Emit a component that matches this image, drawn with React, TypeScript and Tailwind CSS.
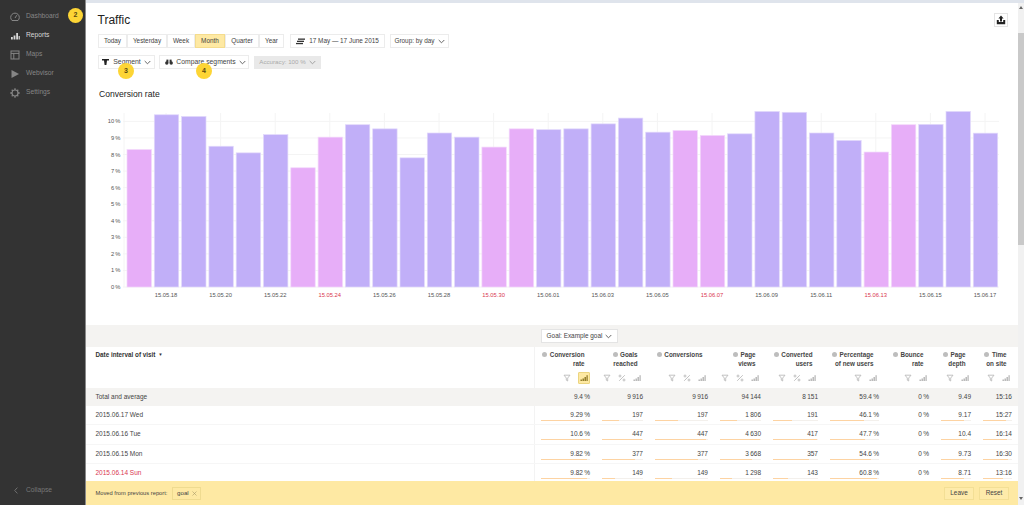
const FONT = "font-['Liberation_Sans',Arial,sans-serif]";

const bars: [number, boolean][] = [
  [8.3, true], [10.4, false], [10.3, false], [8.5, false], [8.1, false], [9.2, false], [7.2, true], [9.05, true],
  [9.8, false], [9.55, false], [7.8, false], [9.3, false], [9.05, false], [8.45, true], [9.55, true], [9.5, false],
  [9.55, false], [9.85, false], [10.2, false], [9.35, false], [9.45, true], [9.15, true], [9.25, false], [10.6, false],
  [10.55, false], [9.3, false], [8.85, false], [8.15, true], [9.8, true], [9.82, false], [10.6, false], [9.29, false],
];

const dateLabels: [string, boolean][] = [
  ["15.05.18", false], ["15.05.20", false], ["15.05.22", false], ["15.05.24", true], ["15.05.26", false],
  ["15.05.28", false], ["15.05.30", true], ["15.06.01", false], ["15.06.03", false], ["15.06.05", false],
  ["15.06.07", true], ["15.06.09", false], ["15.06.11", false], ["15.06.13", true], ["15.06.15", false], ["15.06.17", false],
];

function Chevron({ className = "" }: { className?: string }) {
  return (
    <svg width="7" height="5" viewBox="0 0 7 5" className={className} fill="none" stroke="currentColor" strokeWidth="0.9">
      <path d="M0.7 1 L3.5 3.8 L6.3 1" />
    </svg>
  );
}

function Badge({ n, className }: { n: number; className: string }) {
  return (
    <div className={`absolute z-10 flex items-center justify-center rounded-full bg-[#fdd535] text-[7px] font-bold text-[#5a4a10] ${className}`}>
      {n}
    </div>
  );
}

function NavItem({ label, active, icon }: { label: string; active?: boolean; icon: React.ReactNode }) {
  return (
    <div className={`flex h-[19px] items-center pl-[10px] text-[6.7px] ${active ? "text-[#d8d8d8]" : "text-[#868686]"}`}>
      <span className="flex w-[16px] items-center">{icon}</span>
      {label}
    </div>
  );
}

function Btn({ w, active, children }: { w: string; active?: boolean; children: React.ReactNode }) {
  return (
    <div className={`flex h-[14px] items-center justify-center gap-[3px] border text-[6.4px] text-[#444] ${w} ${active ? "border-[#f4dc8e] bg-[#fee9a3]" : "border-[#ececec] bg-white"}`}>
      {children}
    </div>
  );
}

function Funnel() {
  return (
    <svg width="8" height="8" viewBox="0 0 8 8" fill="none" stroke="#b4b4b4" strokeWidth="0.8">
      <path d="M1 1.2 H7 L4.7 4 V7 L3.3 6.2 V4 Z" />
    </svg>
  );
}
function Pct() {
  return (
    <svg width="8" height="8" viewBox="0 0 8 8" fill="none" stroke="#b4b4b4" strokeWidth="0.8">
      <path d="M1.2 6.8 L6.8 1.2" />
      <circle cx="2" cy="2" r="1" />
      <circle cx="6" cy="6" r="1" />
    </svg>
  );
}
function MiniBars({ color = "#b4b4b4" }: { color?: string }) {
  return (
    <svg width="8" height="8" viewBox="0 0 8 8" fill={color}>
      <rect x="0.5" y="5.5" width="1.4" height="1.5" />
      <rect x="2.5" y="4.5" width="1.4" height="2.5" />
      <rect x="4.5" y="3" width="1.4" height="4" />
      <rect x="6.5" y="1.2" width="1.2" height="5.8" />
    </svg>
  );
}

type Col = { title: [string, string?]; pct: boolean; selected?: boolean };
const cols: Col[] = [
  { title: ["Conversion", "rate"], pct: false, selected: true },
  { title: ["Goals", "reached"], pct: true },
  { title: ["Conversions"], pct: true },
  { title: ["Page", "views"], pct: true },
  { title: ["Converted", "users"], pct: true },
  { title: ["Percentage", "of new users"], pct: false },
  { title: ["Bounce", "rate"], pct: false },
  { title: ["Page", "depth"], pct: false },
  { title: ["Time", "on site"], pct: false },
];

const GRID = "grid grid-cols-[449px_61px_53px_65px_53px_57px_61px_50px_42px_41px]";

const rows: { label: string; red?: boolean; vals: string[]; fills: number[] }[] = [
  {
    label: "2015.06.17 Wed",
    vals: ["9.29\u2009%", "197", "197", "1\u2009806", "191", "46.1\u2009%", "0\u2009%", "9.17", "15:27"],
    fills: [88, 42, 44, 41, 42, 70, 0, 78, 79],
  },
  {
    label: "2015.06.16 Tue",
    vals: ["10.6\u2009%", "447", "447", "4\u2009630", "417", "47.7\u2009%", "0\u2009%", "10.4", "16:14"],
    fills: [99, 98, 97, 98, 98, 72, 0, 87, 84],
  },
  {
    label: "2015.06.15 Mon",
    vals: ["9.82\u2009%", "377", "377", "3\u2009668", "357", "54.6\u2009%", "0\u2009%", "9.73", "16:30"],
    fills: [93, 80, 81, 79, 81, 83, 0, 83, 85],
  },
  {
    label: "2015.06.14 Sun",
    red: true,
    vals: ["9.82\u2009%", "149", "149", "1\u2009298", "143", "60.8\u2009%", "0\u2009%", "8.71", "13:16"],
    fills: [93, 32, 32, 29, 33, 95, 0, 75, 69],
  },
];
const totals = ["9.4\u2009%", "9\u2009916", "9\u2009916", "94\u2009144", "8\u2009151", "59.4\u2009%", "0\u2009%", "9.49", "15:16"];

export default function App() {
  const y0 = 287;
  const step = 16.56;
  return (
    <div className={`relative flex h-[505px] w-[1024px] overflow-hidden bg-white ${FONT}`}>
      {/* Sidebar */}
      <aside className="flex h-full w-[86px] shrink-0 flex-col justify-between border-r border-[#8a8a8a] bg-[#333333] pb-[5px] pt-[7px]">
        <div>
          <NavItem
            label="Dashboard"
            icon={
              <svg width="10" height="10" viewBox="0 0 10 10" fill="none" stroke="#868686" strokeWidth="1">
                <path d="M2 8.5 A4.3 4.3 0 1 1 8 8.5 Z" />
                <path d="M5 6 L6.8 3.2" />
              </svg>
            }
          />
          <NavItem
            label="Reports"
            active
            icon={
              <svg width="10" height="10" viewBox="0 0 10 10" fill="#d8d8d8">
                <rect x="1" y="6" width="1.8" height="2.5" />
                <rect x="3.6" y="4.5" width="1.8" height="4" />
                <rect x="6.2" y="2" width="1.8" height="6.5" />
                <rect x="8.6" y="5" width="1.2" height="3.5" />
              </svg>
            }
          />
          <NavItem
            label="Maps"
            icon={
              <svg width="10" height="10" viewBox="0 0 10 10" fill="none" stroke="#868686" strokeWidth="1">
                <rect x="1" y="1" width="8" height="8" />
                <path d="M1 3.4 H9 M3.8 3.4 V9" />
              </svg>
            }
          />
          <NavItem
            label="Webvisor"
            icon={
              <svg width="10" height="10" viewBox="0 0 10 10" fill="#868686">
                <path d="M1.5 1 L9 5 L1.5 9 Z" />
              </svg>
            }
          />
          <NavItem
            label="Settings"
            icon={
              <svg width="10" height="10" viewBox="0 0 10 10" fill="none" stroke="#868686">
                <circle cx="5" cy="5" r="3" strokeWidth="1.2" />
                <path strokeWidth="1.3" d="M5 0.3 V2 M5 8 V9.7 M0.3 5 H2 M8 5 H9.7 M1.7 1.7 L2.9 2.9 M7.1 7.1 L8.3 8.3 M8.3 1.7 L7.1 2.9 M2.9 7.1 L1.7 8.3" />
              </svg>
            }
          />
        </div>
        <div className="flex h-[19px] items-center pl-[14px] text-[6.7px] text-[#787878]">
          <span className="flex w-[12px] items-center">
            <svg width="4" height="7" viewBox="0 0 4 7" fill="none" stroke="#787878" strokeWidth="0.9">
              <path d="M3.4 0.6 L0.7 3.5 L3.4 6.4" />
            </svg>
          </span>
          Collapse
        </div>
      </aside>

      <Badge n={2} className="left-[68px] top-[8px] h-[15px] w-[15px]" />
      <Badge n={3} className="left-[118px] top-[63px] h-[16px] w-[16px]" />
      <Badge n={4} className="left-[196px] top-[63px] h-[16px] w-[16px]" />

      <div className="flex min-w-0 flex-1 flex-col">
        <div className="h-[3px] shrink-0 bg-[#dfe4ec]" />
        <div className="flex min-h-0 flex-1">
          {/* Main */}
          <main className="flex min-w-0 flex-1 flex-col">
            <div className="min-h-0 flex-1 overflow-hidden">
              <div className="mt-[10px] flex h-[14px] items-center justify-between pl-[11.5px] pr-[10px]">
                <h1 className="text-[12px] leading-none text-[#222]">Traffic</h1>
                <div className="flex h-[14px] w-[14px] items-center justify-center border border-[#e4e4e4] bg-white">
                  <svg width="10" height="10" viewBox="0 0 10 10" fill="#222">
                    <path d="M5 0.5 L7.6 3.4 H6 V6.4 H4 V3.4 H2.4 Z" />
                    <path d="M0.8 5 H2.8 V7 H7.2 V5 H9.2 V9.2 H0.8 Z" />
                  </svg>
                </div>
              </div>

              <div className="mt-[7px] flex pl-[12px]">
                <Btn w="w-[29px]">Today</Btn>
                <Btn w="w-[40px]">Yesterday</Btn>
                <Btn w="w-[28px]">Week</Btn>
                <Btn w="w-[30px]" active>Month</Btn>
                <Btn w="w-[34px]">Quarter</Btn>
                <Btn w="w-[25px]">Year</Btn>
                <div className="ml-[6px]">
                  <Btn w="w-[95px]">
                    <svg width="9" height="7" viewBox="0 0 9 7" fill="#333" className="mr-[1px]">
                      <rect x="2" y="0.5" width="7" height="1.3" />
                      <rect x="1" y="2.7" width="7" height="1.3" />
                      <rect x="0" y="4.9" width="7" height="1.3" />
                    </svg>
                    17 May — 17 June 2015
                  </Btn>
                </div>
                <div className="ml-[5px]">
                  <Btn w="w-[59px]">
                    Group: by day <Chevron className="text-[#555]" />
                  </Btn>
                </div>
              </div>

              <div className="mt-[7px] flex items-center pl-[12px]">
                <Btn w="w-[57px]">
                  <svg width="7" height="6" viewBox="0 0 7 6" fill="#222" className="mr-[1px]">
                    <path d="M0 0 H7 V1.6 H5 L4.4 6 H2.6 L2 1.6 H0 Z" />
                  </svg>
                  <span className="text-[6.9px]">Segment</span> <Chevron className="text-[#555]" />
                </Btn>
                <div className="ml-[4px]">
                  <Btn w="w-[90px] pl-[3px]">
                    <svg width="8" height="6" viewBox="0 0 8 6" fill="#333">
                      <circle cx="1.8" cy="4" r="1.7" />
                      <circle cx="6.2" cy="4" r="1.7" />
                      <rect x="1.4" y="0.6" width="2" height="3" />
                      <rect x="4.6" y="0.6" width="2" height="3" />
                    </svg>
                    <span className="text-[6.8px]">Compare segments</span> <Chevron className="text-[#555]" />
                  </Btn>
                </div>
                <div className="ml-[5px] flex h-[13px] w-[67px] items-center justify-center gap-[3px] bg-[#e9e9e9] text-[6.2px] text-[#aaa]">
                  Accuracy: 100 % <Chevron className="text-[#999]" />
                </div>
              </div>

              <h2 className="mt-[19px] h-[12px] pl-[13px] text-[8.6px] leading-[12px] text-[#222]">Conversion rate</h2>

              {/* Chart */}
              <svg width="932" height="225" viewBox="86 100 932 225" className="block">
                {Array.from({ length: 11 }, (_, i) => (
                  <line key={i} x1="123" x2="999" y1={y0 - i * step} y2={y0 - i * step} stroke="#f4f4f4" strokeWidth="1" />
                ))}
                <line x1="124" x2="124" y1="113" y2={y0} stroke="#f4f4f4" strokeWidth="1" />
                {dateLabels.map((_, i) => (
                  <line key={i} x1={166 + i * 54.6} x2={166 + i * 54.6} y1="113" y2={y0} stroke="#f4f4f4" strokeWidth="1" />
                ))}
                {bars.map(([v, pink], i) => (
                  <rect
                    key={i}
                    x={127 + i * 27.3}
                    y={y0 - v * step}
                    width={24.4}
                    height={v * step}
                    fill={pink ? "#e7aef8" : "#c1aff8"}
                    stroke={pink ? "#f3d8fb" : "#e2d9fb"}
                    strokeWidth="0.7"
                  />
                ))}
                {Array.from({ length: 11 }, (_, i) => (
                  <text key={i} x="120.5" y={y0 - i * step + 2} textAnchor="end" fontSize="5.8" fill="#555">
                    {i}{"\u2009"}%
                  </text>
                ))}
                {dateLabels.map(([t, red], i) => (
                  <text key={t} x={166 + i * 54.6} y="297" textAnchor="middle" fontSize="5.8" fill={red ? "#d9364f" : "#555"}>
                    {t}
                  </text>
                ))}
              </svg>

              {/* Goal selector */}
              <div className="flex h-[22px] items-center bg-[#f4f3f1] pl-[455px]">
                <div className="flex h-[14px] w-[77px] items-center justify-center gap-[3px] border border-[#e4e4e4] bg-white text-[6.4px] text-[#444]">
                  Goal: Example goal <Chevron className="text-[#555]" />
                </div>
              </div>

              {/* Table header */}
              <div className={`${GRID} h-[41px] bg-white`}>
                <div className="flex items-start border-r border-[#f3f3f3] pl-[9.5px] pt-[4px] text-[6.3px] font-bold leading-[8.7px] text-[#333]">
                  Date interval of visit
                  <span className="ml-[3px] text-[4.5px]">▼</span>
                </div>
                {cols.map((c, i) => (
                  <div key={i} className="flex flex-col justify-between pb-[4px] pr-[6px] pt-[4px]">
                    <div className="pr-[5.5px] text-right text-[6.3px] font-bold leading-[8.7px] text-[#444]">
                      <span className="mr-[2.5px] inline-block h-[5px] w-[5px] rounded-full bg-[#bdbdbd]" />
                      {c.title[0]}
                      {c.title[1] && (
                        <>
                          <br />
                          {c.title[1]}
                        </>
                      )}
                    </div>
                    <div className="flex h-[12px] items-center justify-end gap-[7px] pr-[2px]">
                      <Funnel />
                      {c.pct && <Pct />}
                      {c.selected ? (
                        <span className="-mr-[2px] flex h-[12px] w-[12px] items-center justify-center rounded-[1px] border border-[#ecd580] bg-[#fee9a3]">
                          <MiniBars color="#8a7420" />
                        </span>
                      ) : (
                        <MiniBars />
                      )}
                    </div>
                  </div>
                ))}
              </div>

              {/* Totals */}
              <div className={`${GRID} h-[18px] items-center bg-[#f4f3f1] text-[6.5px] text-[#444]`}>
                <div className="pl-[9.5px]">Total and average</div>
                {totals.map((v, i) => (
                  <div key={i} className="pr-[6px] text-right">{v}</div>
                ))}
              </div>

              {/* Rows */}
              {rows.map((r) => (
                <div key={r.label} className={`${GRID} h-[19.3px] border-b border-[#f6f6f6] text-[6.5px] text-[#444]`}>
                  <div className={`border-r border-[#f3f3f3] pl-[9.5px] pt-[4px] leading-[10px] ${r.red ? "text-[#d9364f]" : ""}`}>{r.label}</div>
                  {r.vals.map((v, i) => (
                    <div key={i} className="pl-[6px] pr-[6px] pt-[4px]">
                      <div className="h-[10px] text-right leading-[10px]">{v}</div>
                      {r.fills[i] > 0 && (
                        <div className="h-[1px] bg-[#f3f0ec]">
                          <div className="h-full bg-[#fdd3a2]" style={{ width: `${r.fills[i]}%` }} />
                        </div>
                      )}
                    </div>
                  ))}
                </div>
              ))}
            </div>

            {/* Footer */}
            <footer className="flex h-[24px] shrink-0 items-center justify-between bg-[#fee9a3] pl-[9.5px] pr-[9px] text-[#444]">
              <div className="flex items-center text-[5.75px]">
                Moved from previous report:
                <span className="ml-[5px] flex h-[13px] w-[29px] items-center justify-center gap-[3px] border border-[#efdb90] text-[6.2px]">
                  goal
                  <svg width="5" height="5" viewBox="0 0 5 5" stroke="#a89a68" strokeWidth="0.6">
                    <path d="M0.5 0.5 L4.5 4.5 M4.5 0.5 L0.5 4.5" />
                  </svg>
                </span>
              </div>
              <div className="flex gap-[5px] text-[6.4px]">
                <div className="flex h-[13px] w-[30px] items-center justify-center border border-[#f3df95] bg-[#feebaa]">Leave</div>
                <div className="flex h-[13px] w-[30px] items-center justify-center border border-[#f3df95] bg-[#feebaa]">Reset</div>
              </div>
            </footer>
          </main>

          {/* Scrollbar */}
          <div className="flex w-[6px] shrink-0 flex-col bg-[#f1f1f1]">
            <div className="flex h-[30px] shrink-0 justify-center pt-[2px]">
              <span className="mt-[1px] h-0 w-0 border-x-[2px] border-b-[3px] border-x-transparent border-b-[#666]" />
            </div>
            <div className="h-[212px] shrink-0 bg-[#c9c9c9]" />
            <div className="flex-1" />
            <div className="flex h-[8px] shrink-0 justify-center">
              <span className="h-0 w-0 border-x-[2px] border-t-[3px] border-x-transparent border-t-[#666]" />
            </div>
          </div>
        </div>
      </div>
    </div>
  );
}
